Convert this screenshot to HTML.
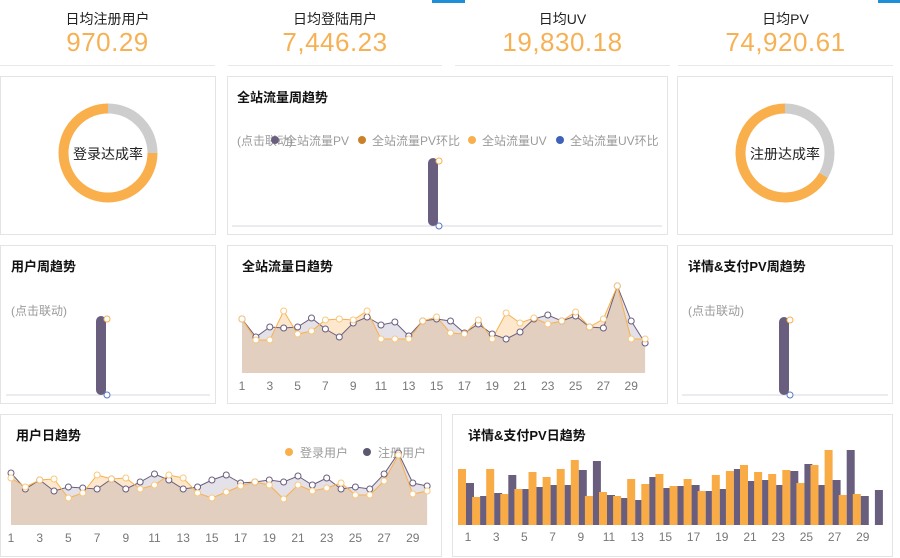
<!DOCTYPE html>
<html><head><meta charset="utf-8">
<style>
*{margin:0;padding:0;box-sizing:border-box}
body{width:900px;height:558px;background:#fff;font-family:"Liberation Sans","Noto Sans CJK SC",sans-serif;position:relative;overflow:hidden}
.a{position:absolute}
.stat{position:absolute;top:0;height:66px;border-bottom:1px solid #e8e8e8;text-align:center}
.stat .t{font-size:14px;color:#222;margin-top:10px;line-height:18px}
.stat .n{font-size:26px;color:#f7b155;line-height:28px;letter-spacing:0.5px}
.p{position:absolute;border:1px solid #e4e4e4;background:#fff}
.tt{position:absolute;font-size:13px;font-weight:bold;color:#111}
.g{position:absolute;font-size:12px;color:#9a9a9a}
svg{position:absolute;left:0;top:0}
</style></head><body>
<div class="a" style="left:432px;top:0;width:33px;height:3px;background:#1e8fd6"></div>
<div class="a" style="left:878px;top:0;width:22px;height:3px;background:#1e8fd6"></div>
<div class="stat" style="left:0;width:215px"><div class="t">日均注册用户</div><div class="n">970.29</div></div>
<div class="stat" style="left:228px;width:214px"><div class="t">日均登陆用户</div><div class="n">7,446.23</div></div>
<div class="stat" style="left:455px;width:215px"><div class="t">日均UV</div><div class="n">19,830.18</div></div>
<div class="stat" style="left:678px;width:215px"><div class="t">日均PV</div><div class="n">74,920.61</div></div>

<div class="p" style="left:0;top:76px;width:216px;height:159px"></div>
<div class="p" style="left:227px;top:76px;width:441px;height:159px"></div>
<div class="p" style="left:677px;top:76px;width:216px;height:159px"></div>
<div class="p" style="left:0;top:245px;width:216px;height:159px"></div>
<div class="p" style="left:227px;top:245px;width:441px;height:159px"></div>
<div class="p" style="left:677px;top:245px;width:216px;height:159px"></div>
<div class="p" style="left:0;top:414px;width:442px;height:143px"></div>
<div class="p" style="left:452px;top:414px;width:441px;height:143px"></div>

<div class="tt" style="left:237px;top:87px">全站流量周趋势</div>
<div class="tt" style="left:11px;top:256px">用户周趋势</div>
<div class="tt" style="left:242px;top:256px">全站流量日趋势</div>
<div class="tt" style="left:688px;top:256px">详情&amp;支付PV周趋势</div>
<div class="tt" style="left:16px;top:425px">用户日趋势</div>
<div class="tt" style="left:468px;top:425px">详情&amp;支付PV日趋势</div>

<div class="g" style="left:237px;top:132px">(点击联动)</div>
<div class="g" style="left:285px;top:132px">全站流量PV</div>
<div class="g" style="left:372px;top:132px">全站流量PV环比</div>
<div class="g" style="left:482px;top:132px">全站流量UV</div>
<div class="g" style="left:570px;top:132px">全站流量UV环比</div>
<div class="g" style="left:11px;top:302px">(点击联动)</div>
<div class="g" style="left:688px;top:302px">(点击联动)</div>
<div class="g" style="left:300px;top:444px;font-size:12px">登录用户</div>
<div class="g" style="left:378px;top:444px;font-size:12px">注册用户</div>

<div class="a" style="left:66px;top:144px;font-size:14px;color:#222;width:84px;text-align:center">登录达成率</div>
<div class="a" style="left:743px;top:144px;font-size:14px;color:#222;width:84px;text-align:center">注册达成率</div>

<svg id="s" width="900" height="558" xmlns="http://www.w3.org/2000/svg"></svg>
<script>
var s=document.getElementById('s'),h='';
function arc(cx,cy,r,a0,a1,c){var p=function(a){a=(a-90)*Math.PI/180;return [cx+r*Math.cos(a),cy+r*Math.sin(a)]};var A=p(a0),B=p(a1);h+='<path d="M'+A+' A'+r+' '+r+' 0 '+((a1-a0)>180?1:0)+' 1 '+B+'" fill="none" stroke="'+c+'" stroke-width="10"/>';}
arc(108,153,44.5,0,90,'#cdcdcd');arc(108,153,44.5,90,360,'#f9b04c');
arc(785,153,44.5,0,120,'#cdcdcd');arc(785,153,44.5,120,360,'#f9b04c');
[[275,'#6a5e7e'],[362,'#c9822a'],[472,'#f9b04c'],[560,'#3e62b8']].forEach(function(d){h+='<circle cx="'+d[0]+'" cy="140" r="4" fill="'+d[1]+'"/>'});
h+='<circle cx="289" cy="452" r="4" fill="#f9b04c"/><circle cx="367" cy="452" r="4" fill="#5d5870"/>';
function wk(x,y0,y1,ax0,ax1){h+='<line x1="'+ax0+'" y1="'+y1+'" x2="'+ax1+'" y2="'+y1+'" stroke="#d8d8e2"/>';h+='<rect x="'+x+'" y="'+y0+'" width="10" height="'+(y1-y0)+'" rx="5" fill="#6a5e7e"/>';h+='<circle cx="'+(x+11)+'" cy="'+(y0+3)+'" r="3" fill="#fff" stroke="#f9b04c"/><circle cx="'+(x+11)+'" cy="'+y1+'" r="3" fill="#fff" stroke="#5b79c4"/>';}
wk(428,158,226,232,662);wk(96,316,395,6,210);wk(779,317,395,682,888);
function line(x0,dx,base,o,p,lx,ly,n){
 function pts(a){return a.map(function(v,i){return (x0+i*dx).toFixed(1)+','+v}).join(' ')}
 function area(a){return 'M'+x0+','+base+' L'+pts(a)+' L'+(x0+(a.length-1)*dx)+','+base+'Z'}
 h+='<path d="'+area(o)+'" fill="rgba(247,179,90,0.3)"/><path d="'+area(p)+'" fill="rgba(106,94,126,0.18)"/>';
 h+='<polyline points="'+pts(p)+'" fill="none" stroke="#6a5e7e" stroke-width="1"/><polyline points="'+pts(o)+'" fill="none" stroke="#f9b04c" stroke-width="1"/>';
 p.forEach(function(v,i){h+='<circle cx="'+(x0+i*dx)+'" cy="'+v+'" r="3" fill="#fff" stroke="#6a5e7e"/>'});
 o.forEach(function(v,i){h+='<circle cx="'+(x0+i*dx)+'" cy="'+v+'" r="3" fill="#fff" stroke="#f9c77e"/>'});
 for(var i=1;i<=29;i+=2)h+='<text x="'+(lx+(i-1)*n)+'" y="'+ly+'" font-size="12" fill="#777" text-anchor="middle" font-family="Liberation Sans,sans-serif">'+i+'</text>';
}
line(242,13.9,373,[319,340,340,311,334,331,320,319,320,311,339,339,339,321,317,333,334,320,339,313,323,318,324,321,312,327,319,286,339,339],[319,337,327,328,327,318,329,337,323,317,325,322,336,321,319,321,333,324,334,339,332,319,315,321,316,327,328,286,321,343],242,390,13.9);
line(11,14.35,525,[478,487,480,479,498,493,475,479,478,489,485,475,478,493,498,492,486,482,485,499,485,491,488,483,495,495,481,455,494,491],[473,489,480,491,487,488,489,479,489,482,474,480,489,487,480,475,483,482,480,482,476,485,478,489,487,489,474,453,483,486],11,542,14.35);
var O=[469,497,469,494,489,472,477,469,460,496,492,496,479,484,474,486,479,491,475,471,465,472,474,470,483,465,450,495,494,494],
P=[483,496,493,475,489,487,485,485,470,461,495,498,500,477,488,486,485,491,489,469,481,480,485,471,464,485,480,450,496,490];
for(var i=0;i<30;i++){var x=458+i*14.1;
 if(i<29)h+='<rect x="'+x+'" y="'+O[i]+'" width="8" height="'+(525-O[i])+'" fill="#f9ac45"/>';
 h+='<rect x="'+(x+8)+'" y="'+P[i]+'" width="8" height="'+(525-P[i])+'" fill="#6a5e7e"/>';}
for(var i=1;i<=29;i+=2)h+='<text x="'+(468+(i-1)*14.1)+'" y="541" font-size="12" fill="#777" text-anchor="middle" font-family="Liberation Sans,sans-serif">'+i+'</text>';
s.innerHTML=h;
</script>
</body></html>
